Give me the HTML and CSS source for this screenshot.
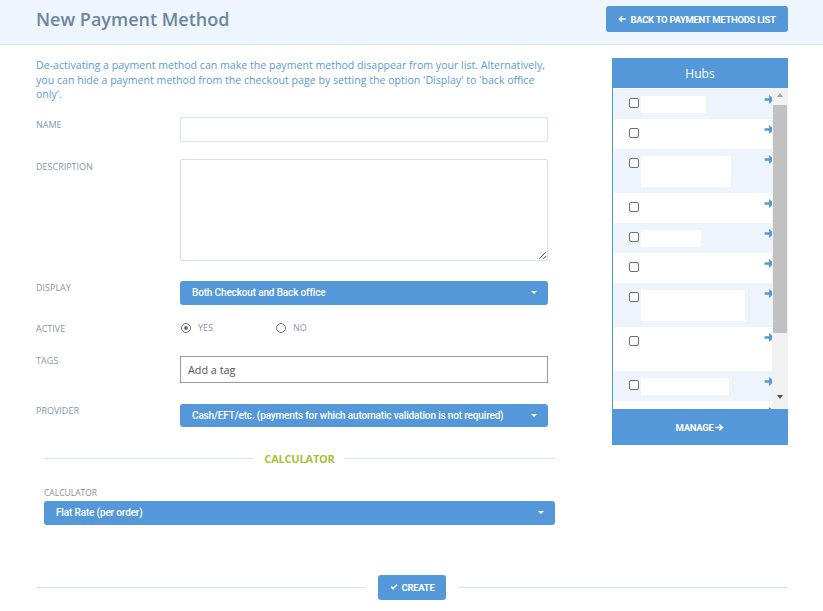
FILE: index.html
```html
<!DOCTYPE html>
<html lang="en">
<head>
<meta charset="utf-8">
<title>New Payment Method</title>
<link rel="stylesheet" href="styles.css">
</head>
<body>
<header class="page-header">
  <h1 class="title">New Payment Method</h1>
  <a class="btn btn-back" href="#"><svg class="ico" viewBox="0 0 10 10" width="8" height="8"><path d="M0.5 5 L4.5 1 L5.8 2.3 L3.9 4.1 H9.5 V5.9 H3.9 L5.8 7.7 L4.5 9 Z" fill="#fff"/></svg>BACK TO PAYMENT METHODS LIST</a>
</header>

<main class="content">
  <section class="form-col">
    <p class="notice">De-activating a payment method can make the payment method disappear from your list. Alternatively, you can hide a payment method from the checkout page by setting the option 'Display' to 'back office only'.</p>

    <div class="row row-name">
      <label class="lbl">NAME</label>
      <input class="text-input" type="text">
    </div>
    <div class="row row-desc">
      <label class="lbl">DESCRIPTION</label>
      <textarea class="text-area"></textarea>
    </div>
    <div class="row row-display">
      <label class="lbl">DISPLAY</label>
      <div class="select"><span>Both Checkout and Back office</span><i class="caret"></i></div>
    </div>
    <div class="row row-active">
      <label class="lbl">ACTIVE</label>
      <div class="radios">
        <span class="radio checked"></span><span class="radio-lbl">YES</span>
        <span class="radio radio-no"></span><span class="radio-lbl">NO</span>
      </div>
    </div>
    <div class="row row-tags">
      <label class="lbl">TAGS</label>
      <div class="tag-input">Add a tag</div>
    </div>
    <div class="row row-provider">
      <label class="lbl">PROVIDER</label>
      <div class="select"><span>Cash/EFT/etc. (payments for which automatic validation is not required)</span><i class="caret"></i></div>
    </div>

    <div class="calc">
      <div class="divider"><span class="line"></span><span class="divider-text">CALCULATOR</span><span class="line"></span></div>
      <label class="lbl calc-lbl">CALCULATOR</label>
      <div class="select select-calc"><span>Flat Rate (per order)</span><i class="caret"></i></div>
    </div>
  </section>

  <aside class="hubs">
    <div class="hubs-head">Hubs</div>
    <div class="hubs-list">
      <div class="hubs-view">
        <div class="hub alt"><span class="cb"></span><span class="name" style="width:65px"></span><svg class="go" viewBox="0 0 12 10" width="12" height="9"><path d="M0 3.6 H5 V0 L11 5 L5 10 V6.4 H0 Z" fill="#5498da"/></svg></div>
        <div class="hub"><span class="cb"></span><span class="name" style="width:60px"></span><svg class="go" viewBox="0 0 12 10" width="12" height="9"><path d="M0 3.6 H5 V0 L11 5 L5 10 V6.4 H0 Z" fill="#5498da"/></svg></div>
        <div class="hub alt tall"><span class="cb"></span><span class="name two" style="width:90px"></span><svg class="go" viewBox="0 0 12 10" width="12" height="9"><path d="M0 3.6 H5 V0 L11 5 L5 10 V6.4 H0 Z" fill="#5498da"/></svg></div>
        <div class="hub"><span class="cb"></span><span class="name" style="width:70px"></span><svg class="go" viewBox="0 0 12 10" width="12" height="9"><path d="M0 3.6 H5 V0 L11 5 L5 10 V6.4 H0 Z" fill="#5498da"/></svg></div>
        <div class="hub alt"><span class="cb"></span><span class="name" style="width:60px"></span><svg class="go" viewBox="0 0 12 10" width="12" height="9"><path d="M0 3.6 H5 V0 L11 5 L5 10 V6.4 H0 Z" fill="#5498da"/></svg></div>
        <div class="hub"><span class="cb"></span><span class="name" style="width:70px"></span><svg class="go" viewBox="0 0 12 10" width="12" height="9"><path d="M0 3.6 H5 V0 L11 5 L5 10 V6.4 H0 Z" fill="#5498da"/></svg></div>
        <div class="hub alt tall"><span class="cb"></span><span class="name two" style="width:104px"></span><svg class="go" viewBox="0 0 12 10" width="12" height="9"><path d="M0 3.6 H5 V0 L11 5 L5 10 V6.4 H0 Z" fill="#5498da"/></svg></div>
        <div class="hub tall"><span class="cb"></span><span class="name" style="width:80px"></span><svg class="go" viewBox="0 0 12 10" width="12" height="9"><path d="M0 3.6 H5 V0 L11 5 L5 10 V6.4 H0 Z" fill="#5498da"/></svg></div>
        <div class="hub alt"><span class="cb"></span><span class="name" style="width:88px"></span><svg class="go" viewBox="0 0 12 10" width="12" height="9"><path d="M0 3.6 H5 V0 L11 5 L5 10 V6.4 H0 Z" fill="#5498da"/></svg></div>
        <div class="hub"><span class="cb"></span><span class="name" style="width:60px"></span><svg class="go" viewBox="0 0 12 10" width="12" height="9"><path d="M0 3.6 H5 V0 L11 5 L5 10 V6.4 H0 Z" fill="#5498da"/></svg></div>
      </div>
      <div class="scrollbar">
        <span class="sb-up"></span>
        <span class="sb-thumb"></span>
        <span class="sb-down"></span>
      </div>
    </div>
    <a class="btn btn-manage" href="#">MANAGE<svg class="ico-r" viewBox="0 0 10 10" width="9" height="9"><path d="M9.5 5 L5.5 1 L4.2 2.3 L6.1 4.1 H0.5 V5.9 H6.1 L4.2 7.7 L5.5 9 Z" fill="#fff"/></svg></a>
  </aside>
</main>

<footer class="actions">
  <span class="line"></span>
  <a class="btn btn-create" href="#"><svg class="ico" viewBox="0 0 10 10" width="8" height="8"><path d="M0.6 5.2 L2 3.8 L3.8 5.6 L8 1.4 L9.4 2.8 L3.8 8.4 Z" fill="#fff"/></svg>CREATE</a>
  <span class="line"></span>
</footer>
</body>
</html>
```

FILE: styles.css
```css
* { box-sizing: border-box; }

body {
  margin: 0;
  font-family: "Open Sans", "DejaVu Sans", sans-serif;
  color: #333;
  background: #fff;
}

.page-header {
  height: 45px;
  background: #eff5fc;
  border-bottom: 1px solid #d4e3f0;
  display: flex;
  align-items: flex-start;
  justify-content: space-between;
  padding: 0 35px 0 36px;
}

.title {
  margin: 7px 0 0;
  font-size: 18px;
  font-weight: 600;
  color: #6b879f;
  line-height: 24px;
}

.btn {
  display: flex;
  align-items: center;
  justify-content: center;
  background: #5498da;
  color: #fff;
  text-decoration: none;
  font-family: "Roboto", "Liberation Sans", sans-serif;
  font-weight: 700;
  font-size: 9.5px;
  letter-spacing: -0.3px;
  border-radius: 3px;
}

.btn .ico { margin-right: 4px; }

.btn-back {
  margin-top: 6px;
  width: 182px;
  height: 26px;
}

.content {
  display: flex;
  justify-content: space-between;
  padding: 0 35px 0 36px;
}

.form-col {
  width: 519px;
}

.notice {
  margin: 13px 0 15px;
  font-size: 10.6px;
  line-height: 14.5px;
  color: #5b9bd4;
}

.row {
  display: flex;
  align-items: flex-start;
}

.lbl {
  display: block;
  width: 144px;
  flex: none;
  font-size: 9px;
  line-height: 12px;
  color: #8398ab;
  padding-top: 2px;
}

.text-input {
  width: 368px;
  height: 25px;
  border: 1px solid #d4e0ec;
  border-radius: 2px;
  margin: 0;
  padding: 0 6px;
}

.text-area {
  width: 368px;
  height: 102px;
  border: 1px solid #d4e0ec;
  border-radius: 2px;
  margin: 0;
  padding: 4px 6px;
  font-family: inherit;
  display: block;
}

.row-name { margin-bottom: 17px; }
.row-desc { margin-bottom: 20px; }
.row-display { margin-bottom: 13px; }
.row-active { margin-bottom: 18px; height: 20px; }
.row-tags { margin-bottom: 21px; }

.row-display .lbl, .row-provider .lbl { padding-top: 1px; }
.row-active .lbl { padding-top: 5px; }
.row-tags .lbl { padding-top: 0; margin-top: -1px; }

.select {
  width: 368px;
  height: 24px;
  background: #5498da;
  border-radius: 3px;
  color: #fff;
  display: flex;
  align-items: center;
  justify-content: space-between;
  padding: 0 11px 0 12px;
  font-family: "Roboto", "Liberation Sans", sans-serif;
  font-size: 10px;
  font-weight: 500;
  letter-spacing: -0.15px;
  white-space: nowrap;
}

.row-provider .select { height: 23px; }

.caret {
  width: 0;
  height: 0;
  border-left: 3.5px solid transparent;
  border-right: 3.5px solid transparent;
  border-top: 3.5px solid #fff;
  flex: none;
}

.radios {
  display: flex;
  align-items: center;
  height: 20px;
  padding-left: 1px;
}

.radio {
  width: 10px;
  height: 10px;
  border: 1px solid #707070;
  border-radius: 50%;
  position: relative;
  flex: none;
}

.radio.checked::after {
  content: "";
  position: absolute;
  left: 2px;
  top: 2px;
  width: 4px;
  height: 4px;
  border-radius: 50%;
  background: #707070;
}

.radio-no { margin-left: 63px; }

.radio-lbl {
  margin-left: 7px;
  font-size: 9px;
  color: #8398ab;
  line-height: 12px;
}

.tag-input {
  width: 368px;
  height: 27px;
  border: 1px solid #9a9a9a;
  padding: 0 7px;
  display: flex;
  align-items: center;
  font-size: 10.8px;
  color: #555;
}

.calc {
  margin-left: 8px;
  margin-top: 23px;
}

.divider {
  display: flex;
  align-items: center;
  height: 18px;
}

.divider .line {
  flex: 1;
  height: 1px;
  background: #d8e2ea;
}

.divider-text {
  padding: 0 10px;
  font-size: 11px;
  font-weight: 700;
  color: #a8c03a;
  letter-spacing: -0.2px;
}

.calc-lbl {
  width: auto;
  margin-top: 19px;
  padding-top: 0;
  font-size: 8.5px;
  line-height: 11px;
  color: #8a8f95;
}

.select-calc {
  width: 511px;
  margin-top: 3px;
  padding-left: 12px;
}

/* Hubs panel */
.hubs {
  width: 176px;
  margin-top: 13px;
}

.hubs-head {
  height: 30px;
  background: #5498da;
  color: #fff;
  font-size: 12px;
  display: flex;
  align-items: center;
  justify-content: center;
}

.hubs-list {
  height: 321px;
  display: flex;
  border-left: 1px solid #5498da;
  background: #fff;
}

.hubs-view {
  flex: 1;
  overflow: hidden;
  padding-top: 1px;
}

.hub {
  width: 172px;
  height: 30px;
  display: flex;
  align-items: flex-start;
  padding: 9px 0 0 16px;
  background: #fff;
}

.hub.alt { background: #eef4fc; }
.hub.tall { height: 44px; }

.cb {
  width: 10px;
  height: 10px;
  border: 1px solid #6f6f6f;
  border-radius: 2px;
  flex: none;
  background: #fff;
}

.name {
  height: 17px;
  margin-top: -2px;
  margin-left: 2px;
  background: #fff;
  flex: none;
}

.name.two { height: 31px; }

.go {
  margin-left: auto;
  margin-right: 9px;
  margin-top: -3px;
  flex: none;
}

.scrollbar {
  width: 16px;
  flex: none;
  background: #f1f1f1;
  display: flex;
  flex-direction: column;
  align-items: center;
}

.sb-up {
  margin-top: 5px;
  width: 0;
  height: 0;
  border-left: 3.5px solid transparent;
  border-right: 3.5px solid transparent;
  border-bottom: 4px solid #a3a3a3;
}

.sb-thumb {
  margin-top: 8px;
  width: 14px;
  height: 228px;
  background: #c1c1c1;
}

.sb-down {
  margin-top: 62px;
  width: 0;
  height: 0;
  border-left: 3.5px solid transparent;
  border-right: 3.5px solid transparent;
  border-top: 4px solid #505050;
}

.btn-manage {
  height: 36px;
  border-radius: 0;
}

.btn-manage .ico-r { margin-left: 2px; }

.actions {
  display: flex;
  align-items: center;
  padding: 0 35px 0 36px;
  margin-top: 50px;
}

.actions .line {
  flex: 1;
  height: 1px;
  background: #d8e2ea;
}

.btn-create {
  width: 68px;
  height: 25px;
  margin: 0 12px;
}
```
